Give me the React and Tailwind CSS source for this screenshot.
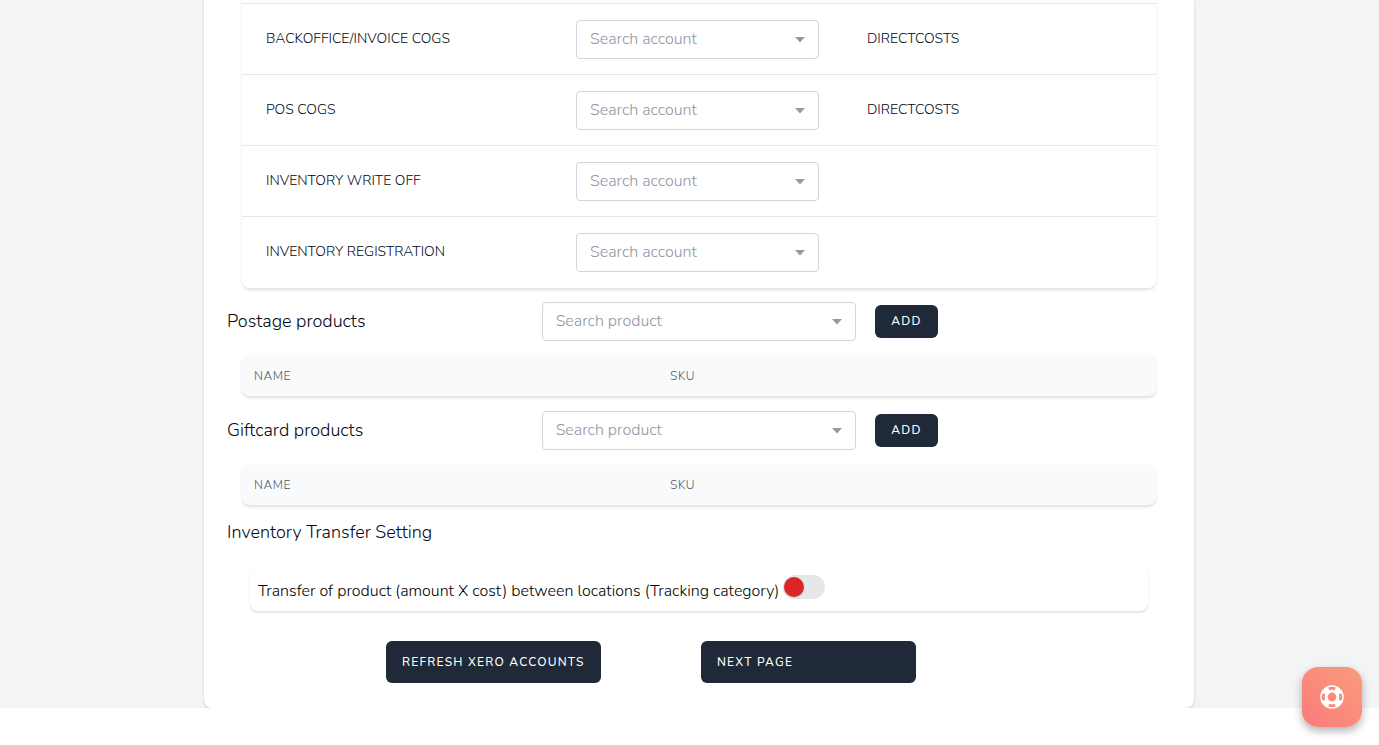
import React, { useState } from 'react';
import clsx from 'clsx';

const accountRows = [
  { id: 'backoffice-cogs', label: 'BACKOFFICE/INVOICE COGS', type: 'DIRECTCOSTS' },
  { id: 'pos-cogs', label: 'POS COGS', type: 'DIRECTCOSTS' },
  { id: 'write-off', label: 'INVENTORY WRITE OFF', type: '' },
  { id: 'registration', label: 'INVENTORY REGISTRATION', type: '' },
];

const SearchSelect = ({ id, label, placeholder }) => (
  <div className="relative">
    <select
      id={id}
      aria-label={label}
      className="block w-full h-[39px] pl-[13px] pr-10 appearance-none rounded border border-gray-300 bg-white text-base text-[#8f95a3] focus:outline-none focus:ring-2 focus:ring-blue-500"
    >
      <option value="">{placeholder}</option>
    </select>
    <svg
      className="absolute right-[14px] top-[17px] pointer-events-none"
      width="10"
      height="6"
      viewBox="0 0 10 6"
      fill="#999999"
      aria-hidden="true"
    >
      <path d="M0 0h10L5 5.5z" />
    </svg>
  </div>
);

const DarkButton = ({ className, children }) => (
  <button
    type="button"
    className={clsx(
      'rounded-md bg-[#1f2937] px-4 text-left text-xs font-medium uppercase tracking-widest text-white hover:bg-gray-700',
      className
    )}
  >
    {children}
  </button>
);

/**
 * Product picker with the table of chosen products under it.
 */
const ProductSection = ({ id, title }) => (
  <section>
    <div className="grid grid-cols-3 items-center">
      <label htmlFor={id} className="text-lg">{title}</label>
      <SearchSelect id={id} label={title} placeholder="Search product" />
      <div className="pl-[19px]">
        <DarkButton className="h-[33px]">Add</DarkButton>
      </div>
    </div>
    <div className="mx-[15px] mt-[15px] mb-[14px] overflow-hidden rounded-lg border-b border-gray-200 bg-[#f9fafb] shadow">
      <table className="w-full table-fixed text-left text-xs uppercase tracking-wider text-gray-600">
        <thead>
          <tr className="h-10">
            <th scope="col" className="w-[416px] px-3 font-light">Name</th>
            <th scope="col" className="px-3 font-light">SKU</th>
          </tr>
        </thead>
      </table>
    </div>
  </section>
);

const HelpIcon = () => (
  <svg width="24" height="24" viewBox="0 0 24 24" fill="none" aria-hidden="true">
    <circle cx="12" cy="12" r="8.1" stroke="#fff" strokeWidth="7.4" />
    <g stroke="#fa8a7c" strokeWidth="3">
      <path d="M8.7 3.8a8.8 8.8 0 0 1 6.6 0" />
      <path d="M8.7 20.2a8.8 8.8 0 0 0 6.6 0" />
      <path d="M3.8 8.7a8.8 8.8 0 0 0 0 6.6" />
      <path d="M20.2 8.7a8.8 8.8 0 0 1 0 6.6" />
    </g>
  </svg>
);

const App = () => {
  const [transfer, setTransfer] = useState(false);

  return (
    <div className="font-[Nunito,Lato,sans-serif] font-light text-gray-950">
      <div className="bg-gray-100 pl-[204px] pr-[185px]">
        <main className="rounded-b-lg bg-white px-[23px] pb-[25px] shadow-[0_1px_3px_rgba(0,0,0,0.14),0_1px_2px_rgba(0,0,0,0.06)]">
          <div className="mx-[15px] mb-[13px] rounded-b-lg border-b border-gray-200 pt-[3px] shadow">
            <table className="w-full table-fixed text-left text-sm">
              <tbody>
                {accountRows.map((row) => (
                  <tr key={row.id} className="h-[71px] border-t border-gray-200">
                    <th scope="row" className="w-[310px] px-6 font-light">{row.label}</th>
                    <td className="w-[291px] px-6">
                      <SearchSelect id={row.id} label={row.label} placeholder="Search account" />
                    </td>
                    <td className="px-6">{row.type}</td>
                  </tr>
                ))}
              </tbody>
            </table>
          </div>

          <ProductSection id="postage" title="Postage products" />
          <ProductSection id="giftcard" title="Giftcard products" />

          <h2 className="text-lg leading-6">Inventory Transfer Setting</h2>
          <div className="mx-[23px] mt-[23px] flex h-11 gap-1 rounded-lg px-2 pt-2 text-base text-black shadow-[0_2px_2px_rgba(0,0,0,0.1),0_0_2px_rgba(0,0,0,0.06)]">
            <label htmlFor="transfer" className="pt-1">
              Transfer of product (amount X cost) between locations (Tracking category)
            </label>
            <span className="relative h-6 w-[42px]">
              <input
                id="transfer"
                type="checkbox"
                role="switch"
                checked={transfer}
                onChange={(e) => setTransfer(e.target.checked)}
                className="peer block h-6 w-full cursor-pointer appearance-none rounded-full bg-gray-200"
              />
              <span className="pointer-events-none absolute left-px top-[2px] size-5 rounded-full bg-[#dc2626] shadow peer-checked:left-5 peer-checked:bg-green-500" />
            </span>
          </div>

          <div className="mt-[30px] flex gap-[100px] pl-[159px]">
            <DarkButton className="h-[42px] w-[215px]">Refresh Xero accounts</DarkButton>
            <DarkButton className="h-[42px] w-[215px]">Next page</DarkButton>
          </div>
        </main>
      </div>

      <button
        type="button"
        aria-label="Help"
        className="fixed bottom-[18px] right-[17px] flex size-[60px] items-center justify-center rounded-2xl bg-linear-to-tr from-[#fb7a7c] to-[#f89c7c] shadow-[0_4px_8px_rgba(0,0,0,0.3)]"
      >
        <HelpIcon />
      </button>
    </div>
  );
};

export default App;
